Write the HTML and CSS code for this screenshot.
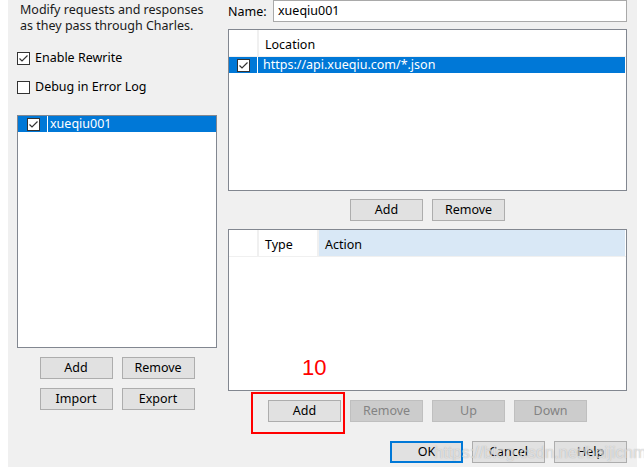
FILE: index.html
```html
<!DOCTYPE html>
<html>
<head>
<meta charset="utf-8">
<link rel="stylesheet" href="styles.css">
</head>
<body>
<div class="dialog">
  <div class="left">
    <p class="desc">Modify requests and responses<br>as they pass through Charles.</p>
    <div class="check-row first">
      <svg class="cb" width="13" height="13" viewBox="0 0 13 13"><rect x="0.5" y="0.5" width="12" height="12" fill="#fff" stroke="#333"/><polyline points="2.5,6.5 5,9 10.5,3.5" fill="none" stroke="#333" stroke-width="1.2"/></svg>
      <span>Enable Rewrite</span>
    </div>
    <div class="check-row second">
      <svg class="cb" width="13" height="13" viewBox="0 0 13 13"><rect x="0.5" y="0.5" width="12" height="12" fill="#fff" stroke="#333"/></svg>
      <span>Debug in Error Log</span>
    </div>
    <div class="list">
      <div class="list-row sel">
        <span class="list-cb">
          <svg class="cb" width="13" height="13" viewBox="0 0 13 13"><rect x="0.5" y="0.5" width="12" height="12" fill="#fff" stroke="#333"/><polyline points="2.5,6.5 5,9 10.5,3.5" fill="none" stroke="#333" stroke-width="1.2"/></svg>
        </span>
        <span class="list-text">xueqiu001</span>
      </div>
    </div>
    <div class="btn-row">
      <button class="btn">Add</button><button class="btn">Remove</button>
    </div>
    <div class="btn-row">
      <button class="btn">Import</button><button class="btn">Export</button>
    </div>
  </div>

  <div class="right">
    <div class="name-row">
      <span class="name-label">Name:</span>
      <div class="name-input">xueqiu001</div>
    </div>

    <div class="table t1">
      <div class="thead">
        <div class="th c0"></div>
        <div class="th c1">Location</div>
      </div>
      <div class="trow sel">
        <div class="td c0">
          <svg class="cb" width="13" height="13" viewBox="0 0 13 13"><rect x="0.5" y="0.5" width="12" height="12" fill="#fff" stroke="#333"/><polyline points="2.5,6.5 5,9 10.5,3.5" fill="none" stroke="#333" stroke-width="1.2"/></svg>
        </div>
        <div class="td c1">https://api.xueqiu.com/*.json</div>
      </div>
    </div>

    <div class="btn-row mid">
      <button class="btn">Add</button><button class="btn">Remove</button>
    </div>

    <div class="table t2">
      <div class="thead">
        <div class="th c0"></div>
        <div class="th ctype">Type</div>
        <div class="th caction">Action</div>
      </div>
      <span class="annot">10</span>
    </div>

    <div class="btn-row rules">
      <span class="highlight"></span>
      <button class="btn">Add</button><button class="btn dis">Remove</button><button class="btn dis">Up</button><button class="btn dis">Down</button>
    </div>

    <div class="btn-row final">
      <button class="btn default">OK</button><button class="btn">Cancel</button><button class="btn">Help</button>
    </div>
  </div>
  <span class="watermark">https://blog.csdn.net/baijicnm</span>
</div>
</body>
</html>
```

FILE: styles.css
```css
* { box-sizing: border-box; }
html, body { margin: 0; padding: 0; background: #fff; }
body {
  font-family: "Noto Sans", "Open Sans", sans-serif;
  font-size: 12.5px;
  color: #000;
  width: 644px;
  height: 471px;
  overflow: hidden;
}
.dialog {
  position: relative;
  margin-left: 8px;
  width: 629px;
  height: 467px;
  background: #f0f0f0;
  display: flex;
  gap: 11px;
  padding-left: 9px;
}
.left {
  width: 200px;
  display: flex;
  flex-direction: column;
}
.desc {
  margin: 2px 0 0 3px;
  line-height: 16px;
  color: #1a1a1a;
}
.check-row {
  display: flex;
  align-items: center;
  gap: 5px;
  height: 16px;
  line-height: 16px;
}
.check-row .cb { flex: none; }
.check-row.first { margin-top: 16px; }
.check-row.second { margin-top: 13px; }
.list {
  margin-top: 20px;
  height: 233px;
  background: #fff;
  border: 1px solid #828790;
}
.list-row {
  display: flex;
  height: 16px;
  line-height: 16px;
}
.sel { background: #0078d7; color: #fff; }
.list-cb {
  width: 30px;
  display: flex;
  align-items: center;
  justify-content: center;
  padding-left: 1px;
  border-right: 1px solid #fff;
}
.list-text { padding-left: 2px; }
.btn-row {
  margin-top: 9px;
  display: flex;
  justify-content: center;
  gap: 9px;
}
.btn {
  width: 73px;
  height: 22px;
  margin: 0;
  padding: 0;
  background: #e1e1e1;
  border: 1px solid #adadad;
  font-family: inherit;
  font-size: 12.5px;
  color: #000;
  line-height: 18px;
}
.btn.dis {
  background: #cccccc;
  border-color: #bfbfbf;
  color: #838383;
}
.btn.default { border: 2px solid #0078d7; }
.right {
  width: 399px;
  display: flex;
  flex-direction: column;
  position: relative;
}
.name-row {
  display: flex;
  align-items: center;
  height: 22px;
}
.name-label { width: 45px; }
.name-input {
  flex: 1;
  height: 22px;
  background: #fff;
  border: 1px solid #a9a9a9;
  padding-left: 4px;
  line-height: 19px;
}
.table {
  position: relative;
  height: 162px;
  background: #fff;
  border: 1px solid #828790;
}
.t1 { margin-top: 7px; }
.t2 { margin-top: 8px; }
.thead {
  display: flex;
  height: 27px;
  border-bottom: 1px solid #f0f0f0;
}
.th {
  line-height: 29px;
  padding-left: 6px;
}
.c0 { width: 30px; flex: none; border-right: 2px solid #f0f0f0; padding: 0; }
.c1 { flex: 1; }
.ctype { width: 60px; border-right: 2px solid #f0f0f0; }
.caction { flex: 1; background: #d9e8f6; margin-right: 1px; }
.trow {
  display: flex;
  height: 16px;
  line-height: 16px;
  margin-right: 1px;
}
.trow .td.c0 {
  display: flex;
  align-items: center;
  justify-content: center;
  border-right: 1px solid #fff;
  width: 29px;
}
.trow .td.c1 { padding-left: 5px; }
.mid { margin-top: 8px; }
.rules { margin-top: 9px; position: relative; }
.final { margin-top: 19px; justify-content: flex-end; }
.annot {
  position: absolute;
  left: 73px;
  top: 125px;
  color: #ff0000;
  font-family: "Liberation Sans", Arial, sans-serif;
  font-size: 22px;
}
.highlight {
  position: absolute;
  left: 23px;
  top: -8px;
  width: 94px;
  height: 42px;
  border: 2px solid #ff0000;
}
.watermark {
  position: absolute;
  left: 426px;
  top: 443px;
  font-family: "Liberation Sans", Arial, sans-serif;
  font-size: 16.5px;
  color: rgba(255,255,255,0.6);
  text-shadow: 0 0 1px rgba(110,110,110,0.55);
  pointer-events: none;
  white-space: nowrap;
}
```
